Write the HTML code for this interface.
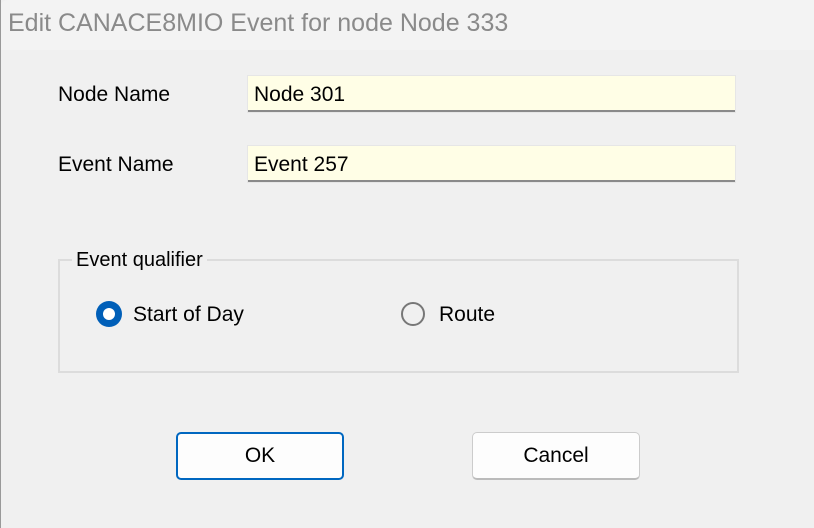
<!DOCTYPE html>
<html><head><style>
body{margin:0;width:814px;height:528px;background:#f0f0f0;font-family:"Liberation Sans",sans-serif;position:relative;overflow:hidden;}
.t{position:absolute;white-space:nowrap;color:#000;font-size:21px;}
.title{position:absolute;left:0;top:0;width:814px;height:50px;background:#f3f3f3;border-top-left-radius:8px;}
.inp{position:absolute;left:248px;width:487px;height:36px;background:#fffee6;border-bottom:2px solid #8a8a8a;box-sizing:border-box;box-shadow:0 0 0 1px #e6e6e6;}
.btn{position:absolute;top:432px;width:168px;height:48px;background:#fdfdfd;border-radius:5px;box-sizing:border-box;text-align:center;line-height:44px;font-size:21px;}
</style></head><body>
<div class="title"></div>
<div style="position:absolute;left:0;top:0;width:1px;height:528px;background:#999"></div>
<div class="t" style="left:8px;top:9px;font-size:25px;color:#8a8a8a">Edit CANACE8MIO Event for node Node 333</div>
<div class="t" style="left:58px;top:83px">Node Name</div>
<div class="inp" style="top:76px"></div>
<div class="t" style="left:254px;top:83px">Node 301</div>
<div class="t" style="left:58px;top:153px">Event Name</div>
<div class="inp" style="top:146px"></div>
<div class="t" style="left:254px;top:153px">Event 257</div>
<div style="position:absolute;left:58px;top:259px;width:677px;height:110px;border:2px solid #dcdcdc;"></div>
<div class="t" style="left:72px;top:249px;background:#f0f0f0;padding:0 4px;font-size:20px">Event qualifier</div>
<div style="position:absolute;left:96px;top:301px;width:26px;height:26px;border-radius:50%;background:#005fb8;"></div>
<div style="position:absolute;left:103px;top:308px;width:12px;height:12px;border-radius:50%;background:#fff;"></div>
<div class="t" style="left:133px;top:303px">Start of Day</div>
<div style="position:absolute;left:401px;top:302px;width:20px;height:20px;border-radius:50%;border:2px solid #777;"></div>
<div class="t" style="left:439px;top:303px">Route</div>
<div class="btn" style="left:176px;border:2px solid #0067c0">OK</div>
<div class="btn" style="left:472px;border:1px solid #ccc;border-bottom:2px solid #bbb;line-height:46px">Cancel</div>
</body></html>
